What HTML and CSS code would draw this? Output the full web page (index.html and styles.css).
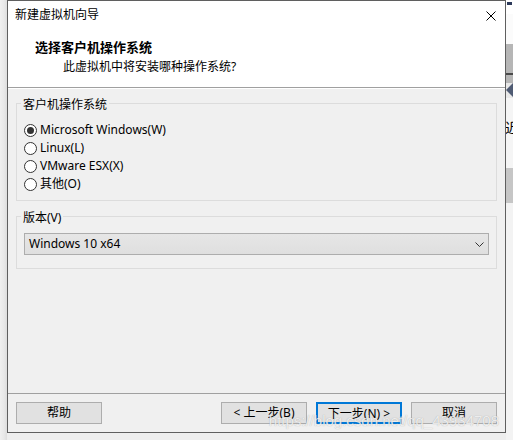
FILE: index.html
```html
<!DOCTYPE html>
<html lang="zh-CN">
<head>
<meta charset="utf-8">
<title>新建虚拟机向导</title>
<link rel="stylesheet" href="styles.css">
</head>
<body>
<div class="screen">
  <div class="gutter"></div>
  <div class="window">
    <div class="titlebar">
      <span class="title">新建虚拟机向导</span>
      <svg class="close" viewBox="0 0 10 10" width="10" height="10"><path d="M0.5 0.5 L9.5 9.5 M9.5 0.5 L0.5 9.5" stroke="#000" stroke-width="1" fill="none"/></svg>
    </div>
    <div class="header">
      <div class="h-title">选择客户机操作系统</div>
      <div class="h-sub">此虚拟机中将安装哪种操作系统?</div>
    </div>
    <div class="content">
      <fieldset class="group group-os">
        <legend>客户机操作系统</legend>
        <div class="radio checked"><span class="dot"></span><span>Microsoft Windows(W)</span></div>
        <div class="radio"><span class="dot"></span><span>Linux(L)</span></div>
        <div class="radio"><span class="dot"></span><span>VMware ESX(X)</span></div>
        <div class="radio"><span class="dot"></span><span>其他(O)</span></div>
      </fieldset>
      <fieldset class="group group-ver">
        <legend>版本(V)</legend>
        <div class="select">
          <span>Windows 10 x64</span>
          <svg class="chev" viewBox="0 0 9 5" width="9" height="5"><path d="M0.5 0.5 L4.5 4.5 L8.5 0.5" stroke="#333" stroke-width="1" fill="none"/></svg>
        </div>
      </fieldset>
    </div>
    <div class="footer">
      <button class="btn">帮助</button>
      <div class="spacer"></div>
      <button class="btn">&lt; 上一步(B)</button>
      <button class="btn btn-default">下一步(N) &gt;</button>
      <button class="btn">取消</button>
      <div class="watermark">https://blog.csdn.net/qq_43934708</div>
    </div>
  </div>
  <div class="side">
    <div class="s-top"><span class="s-mark"></span></div>
    <div class="s-white"></div>
    <div class="s-gray"></div>
    <div class="s-line"></div>
    <div class="s-gray2"></div>
    <div class="s-arrow"></div>
    <div class="s-light"></div>
    <div class="s-char">近</div>
    <div class="s-light2"></div>
    <div class="s-mid"></div>
    <div class="s-rest"></div>
  </div>
</div>
</body>
</html>
```

FILE: styles.css
```css
html, body {
  margin: 0;
  padding: 0;
}

body {
  width: 513px;
  height: 440px;
  overflow: hidden;
  background: #eeeeee;
  font-family: "Noto Sans", "Noto Sans CJK SC", sans-serif;
  font-size: 12px;
  color: #000;
}

.screen {
  display: flex;
  align-items: flex-start;
  height: 440px;
}

.gutter {
  width: 7px;
  height: 440px;
  flex: none;
  background: linear-gradient(to right, #f0f0f0, #e8e8e8 60%, #dddddd);
}

.window {
  width: 497px;
  height: 431px;
  flex: none;
  border: 1px solid #5f5f5f;
  background: #f0f0f0;
  display: flex;
  flex-direction: column;
  position: relative;
}

.titlebar {
  height: 30px;
  flex: none;
  background: #fff;
  display: flex;
  align-items: center;
  justify-content: space-between;
  padding: 0 9px 0 7px;
}

.title {
  font-size: 12px;
  line-height: 28px;
  margin-top: -2px;
}

.close {
  display: block;
  margin-top: -1px;
}

.header {
  height: 56px;
  flex: none;
  background: #fff;
  border-bottom: 1px solid #a0a0a0;
  padding-top: 7px;
  box-sizing: border-box;
  height: 57px;
}

.h-title {
  font-size: 13px;
  font-weight: bold;
  line-height: 18px;
  padding-left: 27px;
}

.h-sub {
  font-size: 12px;
  line-height: 18px;
  padding-left: 55px;
  margin-top: 2px;
}

.content {
  flex: 1;
  border-top: 1px solid #fff;
  padding: 4px 8px 0;
}

.group {
  margin: 0;
  min-width: 0;
  border: 1px solid #dcdcdc;
}

.group legend {
  font-size: 12px;
  line-height: 16px;
  padding: 4px 2px 0;
  margin-left: -3px;
}

.group-os {
  padding: 8px 7px 7px;
}

.group-ver {
  margin-top: 5px;
  padding: 7px 7px 13px;
}

.radio {
  display: flex;
  align-items: center;
  height: 18px;
  line-height: 18px;
}

.dot {
  width: 13px;
  height: 13px;
  box-sizing: border-box;
  border: 1px solid #333;
  border-radius: 50%;
  background: #fff;
  margin-right: 3px;
  flex: none;
  position: relative;
}

.radio.checked .dot::after {
  content: "";
  position: absolute;
  left: 2px;
  top: 2px;
  width: 7px;
  height: 7px;
  border-radius: 50%;
  background: #333;
}

.select {
  height: 22px;
  box-sizing: border-box;
  border: 1px solid #adadad;
  background: linear-gradient(#e6e6e6, #dfdfdf);
  display: flex;
  align-items: center;
  justify-content: space-between;
  padding: 0 4px 0 4px;
  line-height: 20px;
}

.chev {
  display: block;
}

.footer {
  height: 39px;
  flex: none;
  box-sizing: border-box;
  border-top: 1px solid #a0a0a0;
  padding: 8px 8px 0;
  display: flex;
  align-items: flex-start;
  position: relative;
}

.spacer {
  flex: 1;
}

.btn {
  width: 86px;
  height: 22px;
  box-sizing: border-box;
  border: 1px solid #adadad;
  background: #e1e1e1;
  font-family: inherit;
  font-size: 12px;
  line-height: 20px;
  padding: 0;
  color: #000;
  margin-left: 9px;
}

.btn:first-child {
  margin-left: 0;
}

.btn-default {
  border: 2px solid #0078d7;
}

.watermark {
  position: absolute;
  right: 6px;
  bottom: 3px;
  font-family: "Liberation Sans", sans-serif;
  font-size: 15px;
  line-height: 17px;
  color: rgba(255, 255, 255, 0.78);
  text-shadow: 0 0 1px rgba(110, 110, 110, 0.55);
  pointer-events: none;
}

.side {
  width: 7px;
  height: 440px;
  flex: none;
  overflow: hidden;
  display: flex;
  flex-direction: column;
}

.s-top {
  height: 14px;
  background: #fff;
  padding: 2px 0 0 1px;
  box-sizing: border-box;
}

.s-mark {
  display: block;
  width: 5px;
  height: 3px;
  background: #2d3a5a;
}

.s-white {
  height: 30px;
  background: #fbfbfb;
}

.s-gray {
  height: 29px;
  background: #b6b6b6;
}

.s-line {
  height: 2px;
  background: #4a4a4a;
}

.s-gray2 {
  height: 8px;
  background: #b6b6b6;
}

.s-arrow {
  height: 15px;
  background: #e8e8e8;
  clip-path: none;
  position: relative;
}

.s-arrow::after {
  content: "";
  position: absolute;
  left: 0;
  top: 0;
  border-style: solid;
  border-width: 7px 7px 7px 0;
  border-color: transparent #4f5b73 transparent transparent;
}

.s-light {
  height: 18px;
  background: #f5f5f5;
}

.s-char {
  height: 22px;
  background: #f5f5f5;
  font-family: "Noto Sans CJK SC", sans-serif;
  font-size: 14px;
  line-height: 22px;
  white-space: nowrap;
  margin-left: -1px;
}

.s-light2 {
  height: 30px;
  background: #f5f5f5;
}

.s-mid {
  height: 35px;
  background: #c6c6c6;
}

.s-rest {
  flex: 1;
  background: #f3f3f3;
}
```
